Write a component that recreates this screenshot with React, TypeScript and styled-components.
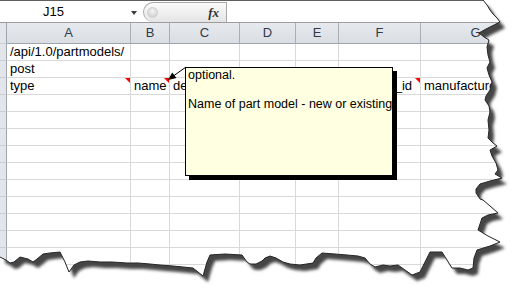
import React from "react";
import styled, { createGlobalStyle } from "styled-components";

const Global = createGlobalStyle`
  *, *::before, *::after { box-sizing: border-box; }
  html, body { margin: 0; padding: 0; background: #fff; }
  body { width: 523px; height: 298px; overflow: hidden; font-family: "Liberation Sans", Arial, sans-serif; }
`;

const Page = styled.div`
  position: relative;
  width: 523px;
  height: 298px;
  overflow: hidden;
  background: #fff;
`;

const FormulaBar = styled.div`
  display: flex;
  height: 23px;
  border-top: 1px solid #5f5f5f;
  border-bottom: 1px solid #9c9c9c;
  background: #fff;
`;

const NameBox = styled.div`
  width: 143px;
  display: flex;
  align-items: center;
  padding-left: 43px;
  font-size: 13px;
  color: #000;
`;

const DropArrow = styled.span`
  margin-left: auto;
  margin-right: 6px;
  margin-top: 2px;
  width: 0;
  height: 0;
  border-top: 4px solid #3c3c3c;
  border-left: 3.5px solid transparent;
  border-right: 3.5px solid transparent;
`;

const Capsule = styled.div`
  width: 84px;
  margin-top: 1px;
  display: flex;
  align-items: center;
  justify-content: space-between;
  padding: 0 7px 0 3px;
  border: 1px solid #a9a9a9;
  border-bottom: none;
  border-radius: 10px 0 0 10px;
  background: linear-gradient(#fbfbfb, #e4e4e4);
`;

const Knob = styled.span`
  width: 11px;
  height: 11px;
  border-radius: 50%;
  background: radial-gradient(circle at 50% 35%, #f4f4f4, #c8c8c8);
  border: 1px solid #d0d0d0;
`;

const Fx = styled.span`
  font-family: "Liberation Serif", "Times New Roman", serif;
  font-style: italic;
  font-weight: bold;
  font-size: 13px;
  color: #333;
`;

const FormulaInput = styled.div`
  flex: 1;
  background: #fff;
`;

const COLS = "7px 124px 39px 70px 56px 43px 82px 110px";

const Row = styled.div<{ $h: number }>`
  display: grid;
  grid-template-columns: ${COLS};
  height: ${(p) => p.$h}px;
`;

const HeadCell = styled.div`
  background: linear-gradient(#e6e9ed, #dadee3);
  border-right: 1px solid #a9afb7;
  border-bottom: 1px solid #9ea5ae;
  text-align: center;
  font-size: 13px;
  line-height: 20px;
  color: #2f3b4b;
`;

const RowHead = styled.div`
  background: #e2e5e9;
  border-right: 1px solid #9ea5ae;
  border-bottom: 1px solid #c8cdd3;
`;

const Cell = styled.div`
  position: relative;
  display: flex;
  align-items: flex-end;
  padding-left: 3px;
  border-right: 1px solid #d9d9d9;
  border-bottom: 1px solid #d9d9d9;
  font-size: 13px;
  line-height: 16px;
  white-space: nowrap;
  color: #000;
`;

const CommentMark = styled.span`
  position: absolute;
  top: 0;
  right: 0;
  width: 0;
  height: 0;
  border-top: 5px solid #ff0000;
  border-left: 5px solid transparent;
`;

const Comment = styled.div`
  position: absolute;
  left: 185px;
  top: 67px;
  width: 208px;
  height: 109px;
  padding: 0 2px;
  background: #ffffe1;
  border: 1px solid #000;
  box-shadow: 4px 4px 0 #000;
  font-size: 12.5px;
  line-height: 14.5px;
  color: #000;
`;

const CommentLine = styled.div`
  min-height: 14.5px;
  white-space: nowrap;
`;

const Overlay = styled.svg`
  position: absolute;
  left: 0;
  top: 0;
  pointer-events: none;
`;

const edge: [number, number][] = [
  [483, 0], [487, 5], [490, 10], [493, 14], [497, 18], [500, 22], [494, 25], [486, 29], [479, 33],
  [484, 37], [489, 40], [487, 47], [488, 55], [490, 62], [487, 68], [489, 75], [492, 82], [490, 90],
  [486, 96], [485, 100], [489, 106], [490, 112], [488, 120], [489, 130], [488, 138], [493, 143],
  [497, 146], [490, 150], [492, 156], [496, 163], [498, 170], [495, 174], [502, 178], [490, 181],
  [480, 184], [476, 189], [476, 193], [480, 199], [483, 200], [490, 206], [498, 213], [488, 215],
  [482, 218], [480, 224], [478, 230], [488, 236], [500, 242], [490, 246], [477, 250], [474, 258],
  [473, 268], [468, 270], [460, 268], [452, 268], [447, 260], [442, 252], [430, 252], [425, 262],
  [420, 272], [412, 275], [405, 270], [398, 265], [390, 266], [383, 265], [375, 267], [370, 264],
  [365, 258], [358, 256], [347, 255], [335, 254], [322, 253], [316, 258], [313, 263], [300, 265],
  [290, 264], [283, 262], [276, 258], [270, 256], [265, 258], [262, 261], [256, 264], [250, 264],
  [247, 262], [242, 255], [225, 254], [210, 255], [207, 262], [203, 276], [198, 272], [193, 268],
  [183, 267], [173, 266], [160, 265], [150, 264], [138, 263], [127, 263], [112, 262], [100, 262],
  [88, 261], [80, 262], [74, 265], [69, 272], [65, 262], [60, 252], [50, 253], [43, 254], [37, 259],
  [33, 262], [28, 259], [20, 257], [14, 262], [10, 263], [6, 260], [2, 258], [0, 257],
];

const edgeStr = edge.map(([x, y]) => `${x},${y}`).join(" L");
const contentPath = `M0,0 L${edgeStr} Z`;
const outsidePath = `M-20,-20 H560 V330 H-20 Z ${contentPath}`;

function TornEdge() {
  return (
    <Overlay width={523} height={298} viewBox="0 0 523 298">
      <defs>
        <clipPath id="outside">
          <path d={outsidePath} clipRule="evenodd" />
        </clipPath>
        <filter id="blur" x="-10%" y="-10%" width="120%" height="120%">
          <feGaussianBlur stdDeviation="1.7" />
        </filter>
      </defs>
      <path d={outsidePath} fill="#fff" fillRule="evenodd" />
      <g clipPath="url(#outside)">
        <path d={contentPath} fill="#454545" transform="translate(5,6)" filter="url(#blur)" />
      </g>
      <polyline
        points={edge.map(([x, y]) => `${x},${y}`).join(" ")}
        fill="none"
        stroke="#262626"
        strokeWidth={1}
      />
    </Overlay>
  );
}

function Arrow() {
  return (
    <Overlay width={523} height={298} viewBox="0 0 523 298">
      <line x1={186} y1={67} x2={174} y2={75.5} stroke="#000" strokeWidth={1} />
      <polygon points="168,80 176.5,77.9 172.2,72.4" fill="#000" />
    </Overlay>
  );
}

const letters = ["A", "B", "C", "D", "E", "F", "G"];

type CellData = { text?: string; mark?: boolean };

const data: CellData[][] = [
  [{ text: "/api/1.0/partmodels/" }],
  [{ text: "post" }],
  [
    { text: "type", mark: true },
    { text: "name", mark: true },
    { text: "description" },
    {},
    {},
    { text: "company_id", mark: true },
    { text: "manufacturer" },
  ],
];

const ROWS = 15;

export default function App() {
  return (
    <Page>
      <Global />
      <FormulaBar>
        <NameBox>
          J15
          <DropArrow />
        </NameBox>
        <Capsule>
          <Knob />
          <Fx>fx</Fx>
        </Capsule>
        <FormulaInput />
      </FormulaBar>
      <Row $h={21}>
        <RowHead />
        {letters.map((l) => (
          <HeadCell key={l}>{l}</HeadCell>
        ))}
      </Row>
      {Array.from({ length: ROWS }).map((_, r) => (
        <Row $h={17} key={r}>
          <RowHead />
          {letters.map((l, c) => {
            const d = data[r]?.[c] ?? {};
            return (
              <Cell key={l}>
                {d.text}
                {d.mark && <CommentMark />}
              </Cell>
            );
          })}
        </Row>
      ))}
      <Arrow />
      <Comment>
        <CommentLine>optional.</CommentLine>
        <CommentLine />
        <CommentLine>Name of part model - new or existing</CommentLine>
      </Comment>
      <TornEdge />
    </Page>
  );
}
